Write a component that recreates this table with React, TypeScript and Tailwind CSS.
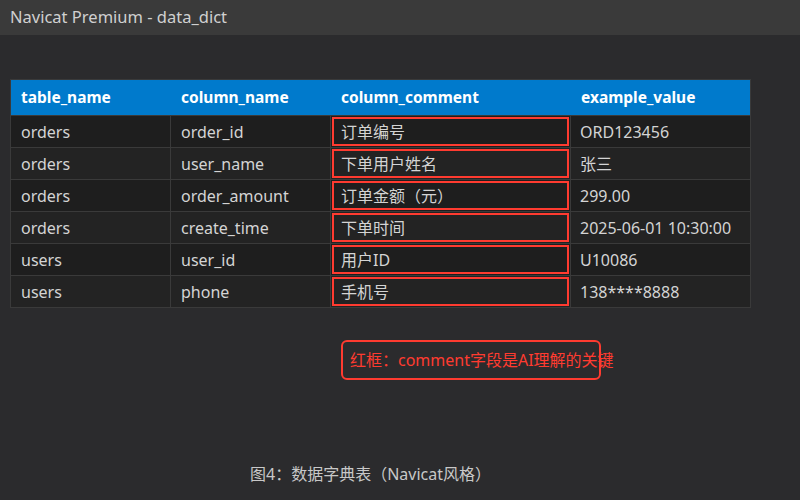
import React from "react";

const rows = [
  ["orders", "order_id", "订单编号", "ORD123456"],
  ["orders", "user_name", "下单用户姓名", "张三"],
  ["orders", "order_amount", "订单金额（元）", "299.00"],
  ["orders", "create_time", "下单时间", "2025-06-01 10:30:00"],
  ["users", "user_id", "用户ID", "U10086"],
  ["users", "phone", "手机号", "138****8888"],
];

const font = { fontFamily: '"Noto Sans", "Noto Sans CJK SC", sans-serif' };

export default function App() {
  return (
    <div className="w-[800px] h-[500px] bg-[#2b2b2d] flex flex-col overflow-hidden" style={font}>
      <div className="h-[35px] bg-[#3a3a3a] flex items-center pl-[10px] text-[16.5px] text-[#d0d0d0] shrink-0">
        Navicat Premium - data_dict
      </div>
      <div className="pt-[44px] pl-[10px]">
        <div className="w-[741px] border border-[#3a3a3a]">
          <div className="flex h-[35px] bg-[#007acc] text-white font-bold text-[15.5px] items-center">
            <div className="w-[160px] pl-[10px]">table_name</div>
            <div className="w-[160px] pl-[10px]">column_name</div>
            <div className="w-[240px] pl-[10px]">column_comment</div>
            <div className="flex-1 pl-[10px]">example_value</div>
          </div>
          {rows.map((r, i) => (
            <div
              key={i}
              className={`flex h-[32px] text-[16px] text-[#d4d4d4] border-t border-[#3a3a3a] ${i % 2 === 0 ? "bg-[#1e1e1e]" : "bg-[#232323]"}`}
            >
              <div className="w-[160px] pl-[10px] flex items-center border-r border-[#3a3a3a]">{r[0]}</div>
              <div className="w-[160px] pl-[10px] flex items-center border-r border-[#3a3a3a]">{r[1]}</div>
              <div className="w-[240px] p-[1px] border-r border-[#3a3a3a]">
                <div className="h-full border-2 border-[#ff3b30] flex items-center pl-[7px]">{r[2]}</div>
              </div>
              <div className="flex-1 pl-[9px] flex items-center">{r[3]}</div>
            </div>
          ))}
        </div>
      </div>
      <div className="pt-[32px] pl-[341px]">
        <div className="w-[260px] h-[40px] border-2 border-[#ff3b30] rounded-[6px] flex items-center pl-[7px] text-[16px] text-[#ff3b30] whitespace-nowrap">
          红框：comment字段是AI理解的关键
        </div>
      </div>
      <div className="pt-[82px] pl-[250px] text-[16px] text-[#c8c8c8]">
        图4：数据字典表（Navicat风格）
      </div>
    </div>
  );
}
